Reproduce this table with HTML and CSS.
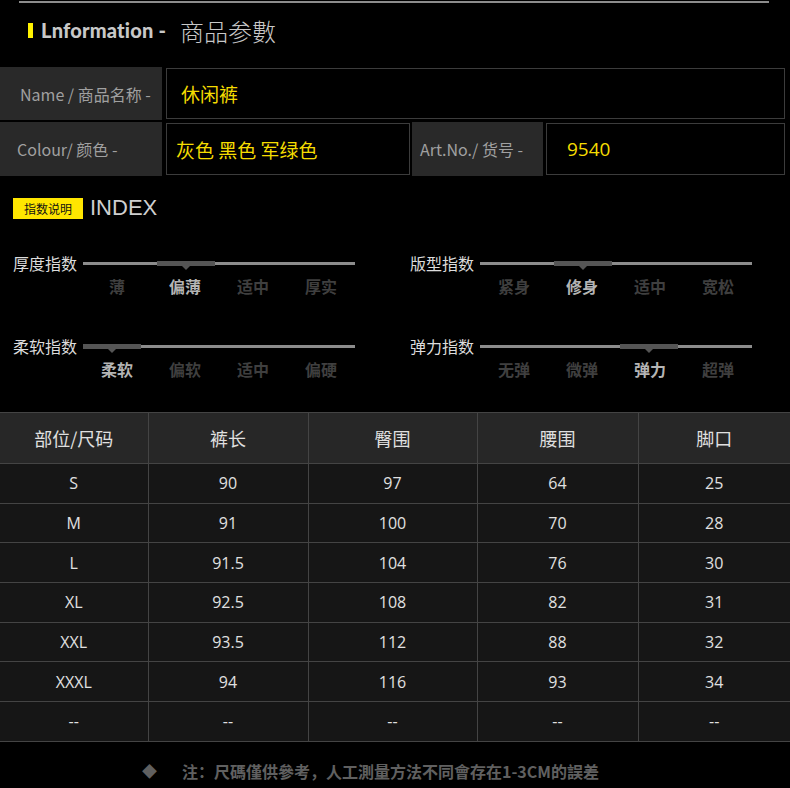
FILE: index.html
```html
<!DOCTYPE html>
<html lang="zh">
<head>
<meta charset="utf-8">
<link rel="stylesheet" href="styles.css">
</head>
<body>
<div class="page">
  <div class="topline"></div>
  <div class="title">
    <span class="title-bar"></span>
    <span class="title-en">Lnformation -</span>
    <span class="title-cn">商品参數</span>
  </div>

  <div class="info">
    <div class="info-row row-name">
      <div class="label label-main label-name">Name / 商品名称 -</div>
      <div class="value value-wide">休闲裤</div>
    </div>
    <div class="info-row row-colour">
      <div class="label label-main">Colour/ 颜色 -</div>
      <div class="value value-colour">灰色 黑色 军绿色</div>
      <div class="label label-art">Art.No./ 货号 -</div>
      <div class="value value-art">9540</div>
    </div>
  </div>

  <div class="index-head">
    <span class="badge">指数说明</span>
    <span class="index-title">INDEX</span>
  </div>

  <div class="sliders">
    <div class="slider">
      <div class="slider-top">
        <span class="slider-label">厚度指数</span>
        <div class="track"><span class="mark pos-1"></span></div>
      </div>
      <div class="opts"><span>薄</span><span class="on">偏薄</span><span>适中</span><span>厚实</span></div>
    </div>
    <div class="slider">
      <div class="slider-top">
        <span class="slider-label">版型指数</span>
        <div class="track"><span class="mark pos-1"></span></div>
      </div>
      <div class="opts"><span>紧身</span><span class="on">修身</span><span>适中</span><span>宽松</span></div>
    </div>
    <div class="slider">
      <div class="slider-top">
        <span class="slider-label">柔软指数</span>
        <div class="track"><span class="mark pos-0"></span></div>
      </div>
      <div class="opts"><span class="on">柔软</span><span>偏软</span><span>适中</span><span>偏硬</span></div>
    </div>
    <div class="slider">
      <div class="slider-top">
        <span class="slider-label">弹力指数</span>
        <div class="track"><span class="mark pos-2"></span></div>
      </div>
      <div class="opts"><span>无弹</span><span>微弹</span><span class="on">弹力</span><span>超弹</span></div>
    </div>
  </div>

  <table class="sizes">
    <colgroup>
      <col class="c1"><col class="c2"><col class="c3"><col class="c4"><col class="c5">
    </colgroup>
    <thead>
      <tr><th>部位/尺码</th><th>裤长</th><th>臀围</th><th>腰围</th><th>脚口</th></tr>
    </thead>
    <tbody>
      <tr><td>S</td><td>90</td><td>97</td><td>64</td><td>25</td></tr>
      <tr><td>M</td><td>91</td><td>100</td><td>70</td><td>28</td></tr>
      <tr><td>L</td><td>91.5</td><td>104</td><td>76</td><td>30</td></tr>
      <tr><td>XL</td><td>92.5</td><td>108</td><td>82</td><td>31</td></tr>
      <tr><td>XXL</td><td>93.5</td><td>112</td><td>88</td><td>32</td></tr>
      <tr><td>XXXL</td><td>94</td><td>116</td><td>93</td><td>34</td></tr>
      <tr><td>--</td><td>--</td><td>--</td><td>--</td><td>--</td></tr>
    </tbody>
  </table>

  <div class="note">
    <span class="diamond">◆</span>
    <span class="note-text">注：尺碼僅供參考，人工測量方法不同會存在1-3CM的誤差</span>
  </div>
</div>
</body>
</html>
```
FILE: styles.css
```css
html, body {
  margin: 0;
  padding: 0;
  background: #000;
}
body {
  font-family: "Noto Sans CJK SC", "Noto Sans", sans-serif;
  color: #ccc;
  width: 790px;
  height: 788px;
  overflow: hidden;
}
.page {
  padding-top: 1px;
}
.topline {
  margin-left: 19px;
  width: 750px;
  height: 2px;
  background: #8c8c8c;
}
.title {
  display: flex;
  align-items: center;
  height: 54px;
  padding-left: 28px;
}
.title-bar {
  width: 5px;
  height: 15px;
  background: #fff200;
  margin-right: 8px;
}
.title-en {
  font-family: "Lato", sans-serif;
  font-weight: 900;
  font-size: 20px;
  color: #c8c8c8;
  letter-spacing: 0.2px;
}
.title-cn {
  font-family: "Noto Sans CJK SC", sans-serif;
  font-weight: 300;
  font-size: 24px;
  color: #c8c8c8;
  margin-left: 14px;
}
.info {
  margin-top: 10px;
  display: flex;
  flex-direction: column;
  gap: 2px;
}
.info-row {
  display: flex;
  height: 54px;
}
.row-name {
  height: 53px;
}
.label {
  background: #292929;
  color: #a0a0a0;
  font-size: 16px;
  display: flex;
  align-items: center;
  justify-content: flex-start;
  box-sizing: border-box;
}
.label-main {
  width: 162px;
  margin-right: 4px;
  padding-left: 17px;
}
.label-name {
  padding-left: 20px;
}
.label-art {
  width: 131px;
  margin: 0 3px 0 2px;
  padding-left: 8px;
}
.value {
  border: 1px solid #3c3c3c;
  margin: 1px 0;
  box-sizing: border-box;
  color: #f5dc00;
  font-size: 19px;
  display: flex;
  align-items: center;
}
.value-wide {
  width: 619px;
  padding-left: 14px;
}
.value-colour {
  width: 244px;
  padding-left: 9px;
}
.value-art {
  width: 239px;
  padding-left: 20px;
  font-family: "Open Sans", sans-serif;
  font-size: 19px;
}
.index-head {
  display: flex;
  align-items: center;
  margin-top: 21px;
  padding-left: 13px;
  height: 22px;
}
.badge {
  width: 70px;
  height: 21px;
  background: #ffe600;
  color: #111;
  font-size: 12px;
  display: flex;
  align-items: center;
  justify-content: center;
}
.index-title {
  font-family: "Liberation Sans", sans-serif;
  font-size: 22px;
  color: #cfcfcf;
  margin-left: 7px;
}
.sliders {
  display: grid;
  grid-template-columns: 397px 393px;
  row-gap: 38px;
  margin-top: 34px;
  padding-left: 13px;
}
.slider-top {
  display: flex;
  align-items: center;
  height: 20px;
}
.slider-label {
  font-size: 16px;
  color: #dcdcdc;
  width: 63px;
  white-space: nowrap;
  margin-right: 7px;
}
.track {
  position: relative;
  width: 272px;
  height: 3px;
  background: #8c8c8c;
}
.mark {
  position: absolute;
  top: -1px;
  width: 58px;
  height: 5px;
  background: #555;
}
.mark::after {
  content: "";
  position: absolute;
  left: 25px;
  top: 5px;
  border-left: 4px solid transparent;
  border-right: 4px solid transparent;
  border-top: 4px solid #555;
}
.pos-0 { left: 0; }
.pos-1 { left: 74px; }
.pos-2 { left: 140px; }
.opts {
  display: grid;
  grid-template-columns: repeat(4, 68px);
  margin-left: 70px;
  margin-top: 1px;
}
.opts span {
  text-align: center;
  font-size: 16px;
  font-weight: 700;
  color: #3f3f3f;
}
.opts span.on {
  color: #b4b4b4;
}
.sizes {
  margin-top: 31px;
  width: 790px;
  border-collapse: collapse;
  table-layout: fixed;
  font-family: "Open Sans", "Noto Sans CJK SC", sans-serif;
}
.c1 { width: 148px; }
.c2 { width: 160px; }
.c3 { width: 169px; }
.c4 { width: 161px; }
.c5 { width: 152px; }
.sizes th, .sizes td {
  border: 1px solid #444;
  text-align: center;
  color: #e0e0e0;
  padding: 0;
}
.sizes th:first-child, .sizes td:first-child { border-left: none; }
.sizes th:last-child, .sizes td:last-child { border-right: none; }
.sizes th {
  background: #272727;
  height: 50px;
  font-family: "Noto Sans CJK SC", sans-serif;
  font-weight: 400;
  font-size: 18px;
}
.sizes td {
  background: #161616;
  height: 38.7px;
  font-size: 16px;
}
.note {
  display: flex;
  align-items: center;
  height: 58px;
  padding-left: 142px;
  color: #606060;
}
.diamond {
  font-size: 15px;
  width: 40px;
}
.note-text {
  font-size: 16px;
  font-weight: 700;
}
```
